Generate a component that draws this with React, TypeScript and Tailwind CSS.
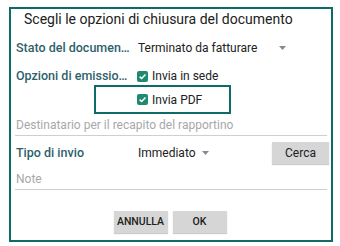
import React from 'react';

const Caret = () => (
  <svg width="7" height="4" viewBox="0 0 7 4" className="block">
    <path d="M0 0 L7 0 L3.5 4 Z" fill="#8a8a8a" />
  </svg>
);

const Check = () => (
  <span className="flex h-[11px] w-[11px] items-center justify-center rounded-[2px] bg-[#1e8a72]">
    <svg width="9" height="9" viewBox="0 0 9 9">
      <path d="M1.6 4.6 L3.6 6.5 L7.5 2.4" fill="none" stroke="#ffffff" strokeWidth="1.5" />
    </svg>
  </span>
);

export default function App() {
  return (
    <div className="h-[246px] w-[340px] bg-white pl-[9px] pt-[7px] font-['Roboto',sans-serif]">
      <div className="flex h-[235px] w-[324px] flex-col border-2 border-[#0f6b67] bg-white">
        {/* Title */}
        <div className="flex h-[20px] items-center pl-[13px] text-[14px] text-[#212121]">
          Scegli le opzioni di chiusura del documento
        </div>

        {/* Stato */}
        <div className="mt-[8px] flex h-[22px] items-center">
          <div className="w-[122px] pl-[5px] text-[12.5px] font-medium text-[#2e5f6c]">Stato del documen…</div>
          <div className="flex w-[155px] items-center justify-between pl-[5px] pr-[2px] text-[12px] text-[#212121]">
            <span>Terminato da fatturare</span>
            <Caret />
          </div>
        </div>

        {/* Opzioni */}
        <div className="mt-[8px] flex h-[18px] items-center">
          <div className="w-[122px] pl-[5px] text-[12.5px] font-medium text-[#2e5f6c]">Opzioni di emissio…</div>
          <div className="flex items-center gap-[4px] pl-[4px] text-[12px] text-[#212121]">
            <Check />
            <span>Invia in sede</span>
          </div>
        </div>

        {/* Invia PDF highlighted */}
        <div className="ml-[83px] flex h-[29px] w-[137px] items-center border-2 border-[#0f6b67] pl-[41px] text-[12px] text-[#212121]">
          <div className="flex items-center gap-[4px]">
            <Check />
            <span>Invia PDF</span>
          </div>
        </div>

        {/* Destinatario */}
        <div className="mx-[4px] flex h-[22px] items-center border-b-[1.5px] border-[#cfcfcf] pl-[1px] text-[12px] text-[#a8a8a8]">
          Destinatario per il recapito del rapportino
        </div>

        {/* Tipo di invio */}
        <div className="mt-[6px] flex h-[22px] items-center">
          <div className="w-[122px] pl-[5px] text-[12.5px] font-medium text-[#2e5f6c]">Tipo di invio</div>
          <div className="flex w-[76px] items-center justify-between pl-[5px] text-[12px] text-[#212121]">
            <span>Immediato</span>
            <Caret />
          </div>
          <div className="ml-auto mr-[2px] flex h-[22px] w-[57px] items-center justify-center bg-[#d6d6d6] text-[12px] text-[#212121] shadow-[0_1px_1px_rgba(0,0,0,0.2)]">
            Cerca
          </div>
        </div>

        {/* Note */}
        <div className="mx-[4px] mt-[4px] flex h-[22px] items-center border-b-[1.5px] border-[#cfcfcf] pl-[1px] text-[12px] text-[#a8a8a8]">
          Note
        </div>

        {/* Buttons */}
        <div className="mt-[21px] flex justify-center gap-[5px] pr-[2px]">
          <div className="flex h-[22px] w-[54px] items-center justify-center bg-[#d6d6d6] text-[10.5px] font-medium text-[#212121] shadow-[0_1px_1px_rgba(0,0,0,0.2)]">
            ANNULLA
          </div>
          <div className="flex h-[22px] w-[54px] items-center justify-center bg-[#d6d6d6] text-[10.5px] font-medium text-[#212121] shadow-[0_1px_1px_rgba(0,0,0,0.2)]">
            OK
          </div>
        </div>
      </div>
    </div>
  );
}
